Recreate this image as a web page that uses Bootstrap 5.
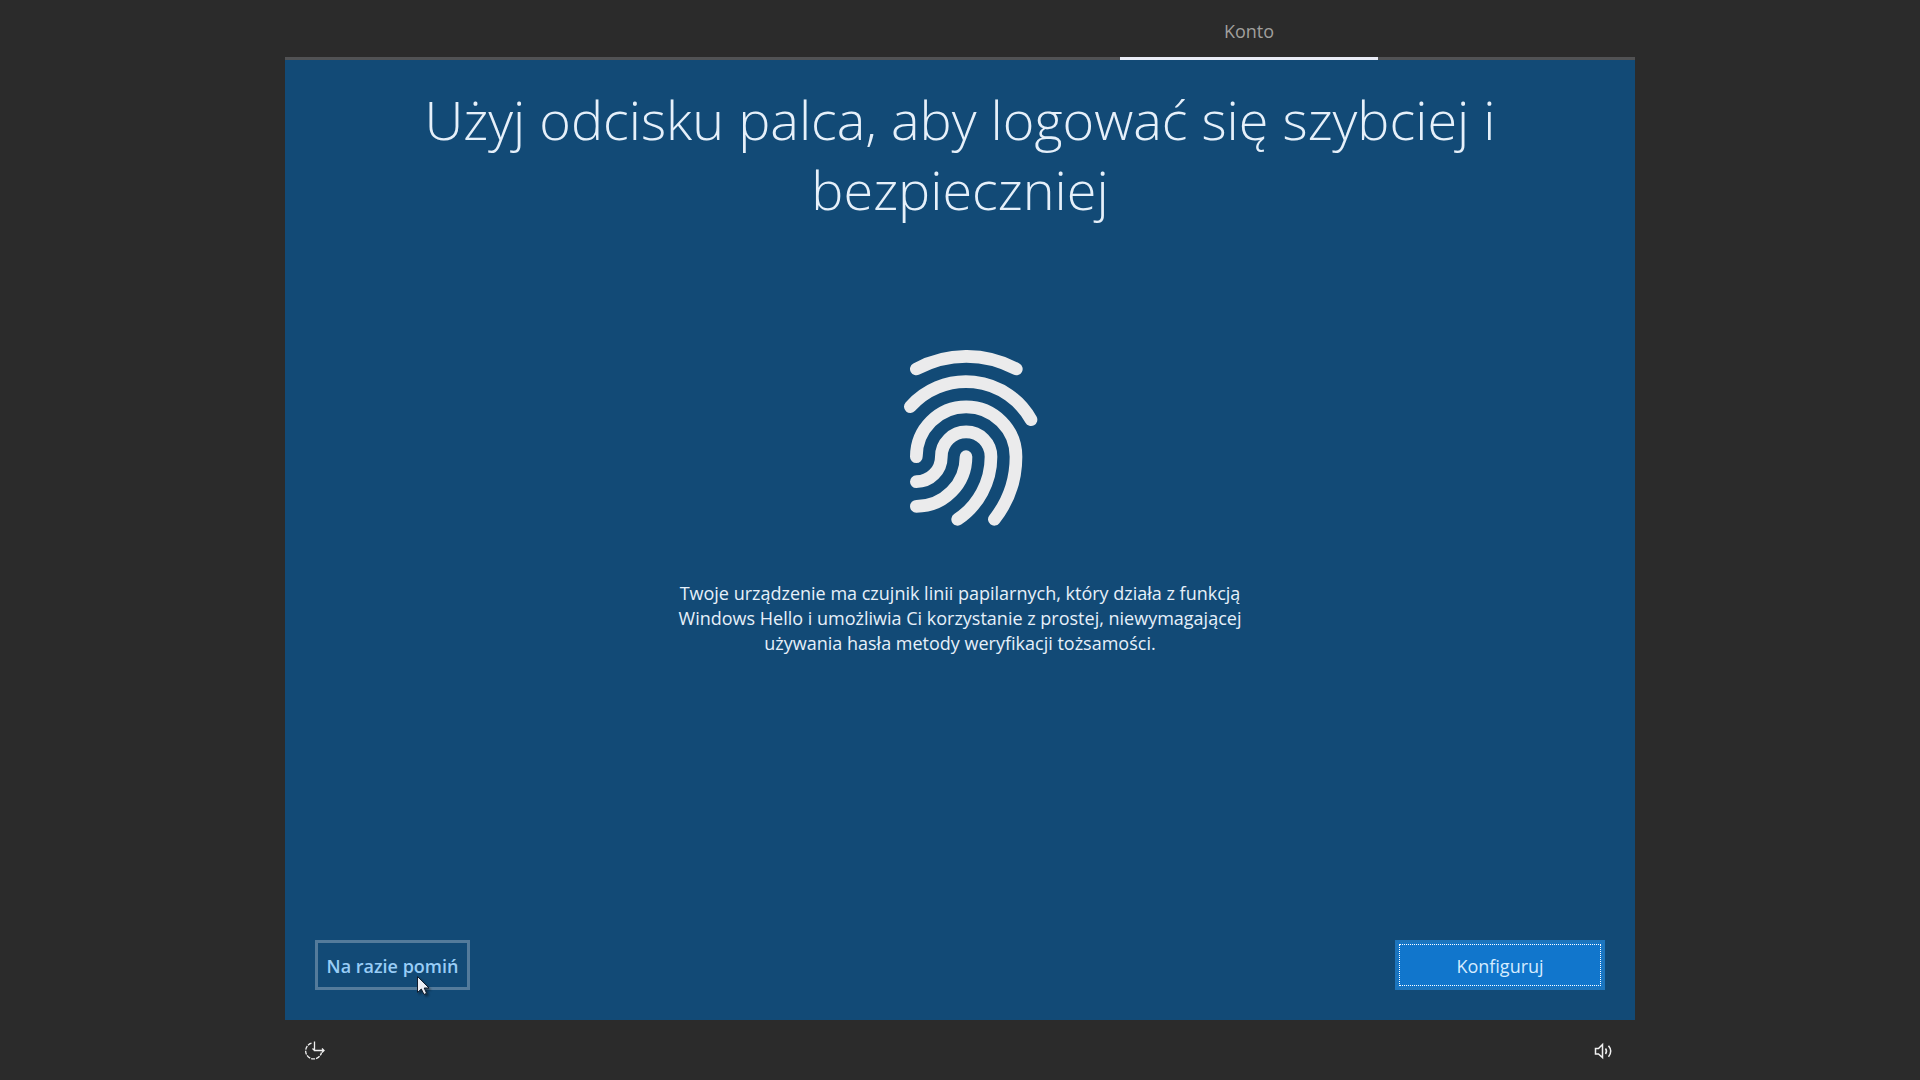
<!DOCTYPE html>
<html lang="pl">
<head>
<meta charset="utf-8">
<meta name="viewport" content="width=device-width, initial-scale=1">
<title>Konto</title>
<link href="https://cdn.jsdelivr.net/npm/bootstrap@5.3.0/dist/css/bootstrap.min.css" rel="stylesheet">
<style>
body { background: #2b2b2b; color: #e6f0fa; font-family: "Open Sans", "Noto Sans", sans-serif; font-size: 18px; line-height: 25px; }
.setup { max-width: 1350px; }
.stages { border-bottom: 3px solid #515254; }
.stage { width: 258px; margin-right: 257px; margin-bottom: -3px; padding: 19px 0 13px; border-bottom: 3px solid #e9ecf6; color: #a09f9d; }
.panel { background: #124a76; padding: 24px 30px 30px; }
.headline { font-size: 54px; font-weight: 300; line-height: 70px; max-width: 1120px; margin: 0 auto; }
.finger { margin: 126px auto 55px; display: block; }
.intro { max-width: 600px; }
.action { height: 50px; border: 3px solid; border-radius: 0; padding: 2px 0 0; font-size: 18px; line-height: 25px; }
.skip { width: 155px; color: #99cdf6; font-weight: 600; border-color: #547b9b; }
.skip:hover { color: #99cdf6; border-color: #7f9db5; }
.configure { width: 210px; color: #d5ecff; background: #1176cc; border-color: #1d75bd; outline: 1px dotted #fff; outline-offset: -5px; }
.configure:hover { color: #fff; background: #1176cc; }
.pointer { position: absolute; left: 102px; top: 36px; pointer-events: none; filter: drop-shadow(2px 2px 1px rgba(0,0,0,.4)); }
.tray { height: 60px; padding: 0 18px; }
.tray .btn { color: #f0f0f0; border: 0; border-radius: 0; line-height: 1; }
</style>
</head>
<body>
<div class="setup container-fluid p-0 min-vh-100 d-flex flex-column">
  <nav class="stages d-flex justify-content-end" aria-label="Etapy">
    <div class="stage text-center" aria-current="step">Konto</div>
  </nav>
  <main class="panel flex-grow-1 d-flex flex-column text-center">
    <h1 class="headline">Użyj odcisku palca, aby logować się szybciej i bezpieczniej</h1>
    <svg class="finger" width="160" height="176" viewBox="0 60 480 528" fill="none" stroke="#ebebec" stroke-width="38" stroke-linecap="round" aria-hidden="true">
      <path d="M109 117A315 315 0 0 1 409 117"/>
      <path d="M91 230A223.500 223.500 0 0 1 453 269"/>
      <path d="M109 380A149.500 149.500 0 0 1 408 380A304 304 0 0 1 343 568"/>
      <path d="M109 455A75 75 0 0 0 184 380A74.500 74.500 0 0 1 333 380A227 227 0 0 1 233 568"/>
      <path d="M258 380A149 149 0 0 1 109 529"/>
    </svg>
    <p class="intro mx-auto mb-4">Twoje urządzenie ma czujnik linii papilarnych, który działa z funkcją<br>Windows Hello i umożliwia Ci korzystanie z prostej, niewymagającej<br>używania hasła metody weryfikacji tożsamości.</p>
    <div class="d-flex justify-content-between mt-auto">
      <div class="position-relative">
        <button type="button" class="btn action skip">Na razie pomiń</button>
        <svg class="pointer" width="14" height="20" viewBox="0 0 14 20" aria-hidden="true"><path d="M.5.5V16.500L4.300 13L7 18.500L9.600 17.300L7.200 12H12Z" fill="#eceef4" stroke="#111c2c"/></svg>
      </div>
      <button type="button" class="btn action configure">Konfiguruj</button>
    </div>
  </main>
  <footer class="tray d-flex justify-content-between align-items-center">
    <button type="button" class="btn p-0" aria-label="Ułatwienia dostępu">
      <svg width="24" height="24" viewBox="0 0 24 24" fill="none" stroke="currentColor" stroke-width="1.300">
        <path d="M11.500 3.500V12.500H21M19 10.500L21 12.500L19 14.500M9.500 10.500L11.500 12.500"/>
        <path d="M8.500 5.200A8 8 0 1 0 18.500 14.500" stroke-dasharray="4 1"/>
      </svg>
    </button>
    <button type="button" class="btn p-0" aria-label="Głośność">
      <svg width="24" height="24" viewBox="-1 -1 24 24" fill="none" stroke="currentColor" stroke-width="1.500">
        <path d="M1.500 9.500H4.500L8.500 5.500V18.500L4.500 15H1.500Z"/>
        <path d="M11.500 9.500Q13.500 12.200 11.500 15M14.500 6.800Q19 12.200 14.500 17.700"/>
      </svg>
    </button>
  </footer>
</div>
<script src="https://cdn.jsdelivr.net/npm/bootstrap@5.3.0/dist/js/bootstrap.bundle.min.js"></script>
</body>
</html>
